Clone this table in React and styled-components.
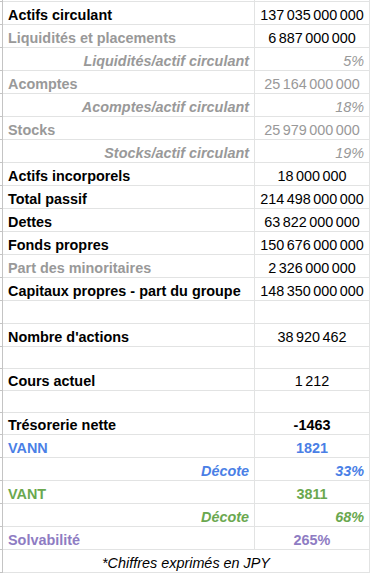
import styled, { createGlobalStyle } from 'styled-components';

const GlobalStyle = createGlobalStyle`
  html, body { margin: 0; padding: 0; background: #fff; }
  body { font-family: "Liberation Sans", Arial, sans-serif; }
`;

const tones = {
  black: '#000000',
  gray: '#999999',
  blue: '#4a7fe6',
  green: '#6aa84f',
  purple: '#8e7cc3',
};

const Sheet = styled.div`
  width: 370px;
  display: flex;
  flex-direction: column;
  font-size: 14.4px;
`;

const Row = styled.div`
  display: grid;
  grid-template-columns: 3px 252px 115px;
  height: ${p => p.$h}px;
`;

const Gutter = styled.div`
  box-sizing: border-box;
  border-right: 1px solid #c4c4c4;
  border-bottom: 1px solid #c4c4c4;
`;

const Cell = styled.div`
  box-sizing: border-box;
  display: flex;
  align-items: flex-end;
  justify-content: ${p => p.$align === 'right' ? 'flex-end' : p.$align === 'center' ? 'center' : 'flex-start'};
  padding: 0 5px 0 5px;
  border-right: 1px solid #e2e3e3;
  border-bottom: 1px solid #e2e3e3;
  line-height: 17px;
  white-space: nowrap;
  color: ${p => tones[p.$tone || 'black']};
  font-weight: ${p => p.$bold ? 700 : 400};
  font-style: ${p => p.$italic ? 'italic' : 'normal'};
`;

const Value = styled(Cell)`
  word-spacing: -1.5px;
`;

const Footer = styled(Cell)`
  grid-column: 2 / 4;
`;

const rows = [
  { label: 'Actifs circulant', value: '137 035 000 000' },
  { label: 'Liquidités et placements', labelTone: 'gray', value: '6 887 000 000' },
  { label: 'Liquidités/actif circulant', ratio: true, tone: 'gray', value: '5%' },
  { label: 'Acomptes', labelTone: 'gray', value: '25 164 000 000', valueTone: 'gray' },
  { label: 'Acomptes/actif circulant', ratio: true, tone: 'gray', value: '18%' },
  { label: 'Stocks', labelTone: 'gray', value: '25 979 000 000', valueTone: 'gray' },
  { label: 'Stocks/actif circulant', ratio: true, tone: 'gray', value: '19%' },
  { label: 'Actifs incorporels', value: '18 000 000' },
  { label: 'Total passif', value: '214 498 000 000' },
  { label: 'Dettes', value: '63 822 000 000' },
  { label: 'Fonds propres', value: '150 676 000 000' },
  { label: 'Part des minoritaires', labelTone: 'gray', value: '2 326 000 000' },
  { label: 'Capitaux propres - part du groupe', value: '148 350 000 000' },
  { label: '', value: '' },
  { label: "Nombre d'actions", value: '38 920 462' },
  { label: '', value: '', h: 22 },
  { label: 'Cours actuel', value: '1 212', h: 22 },
  { label: '', value: '', h: 22 },
  { label: 'Trésorerie nette', value: '-1463', boldValue: true, h: 22 },
  { label: 'VANN', labelTone: 'blue', value: '1821', valueTone: 'blue', boldValue: true },
  { label: 'Décote', ratio: true, tone: 'blue', strong: true, value: '33%' },
  { label: 'VANT', labelTone: 'green', value: '3811', valueTone: 'green', boldValue: true },
  { label: 'Décote', ratio: true, tone: 'green', strong: true, value: '68%' },
  { label: 'Solvabilité', labelTone: 'purple', value: '265%', valueTone: 'purple', boldValue: true },
];

function SheetRow({ r }) {
  if (r.ratio) {
    return (
      <Row $h={r.h || 23}>
        <Gutter />
        <Cell $align="right" $tone={r.tone} $bold $italic>{r.label}</Cell>
        <Value $align="right" $tone={r.tone} $bold={r.strong} $italic>{r.value}</Value>
      </Row>
    );
  }
  return (
    <Row $h={r.h || 23}>
      <Gutter />
      <Cell $tone={r.labelTone} $bold>{r.label}</Cell>
      <Value $align="center" $tone={r.valueTone} $bold={r.boldValue}>{r.value}</Value>
    </Row>
  );
}

export default function App() {
  return (
    <>
      <GlobalStyle />
      <Sheet>
        <Row $h={2}>
          <Gutter />
          <Cell />
          <Cell />
        </Row>
        {rows.map((r, i) => <SheetRow key={i} r={r} />)}
        <Row $h={23}>
          <Gutter />
          <Footer $align="center" $italic>*Chiffres exprimés en JPY</Footer>
        </Row>
      </Sheet>
    </>
  );
}
